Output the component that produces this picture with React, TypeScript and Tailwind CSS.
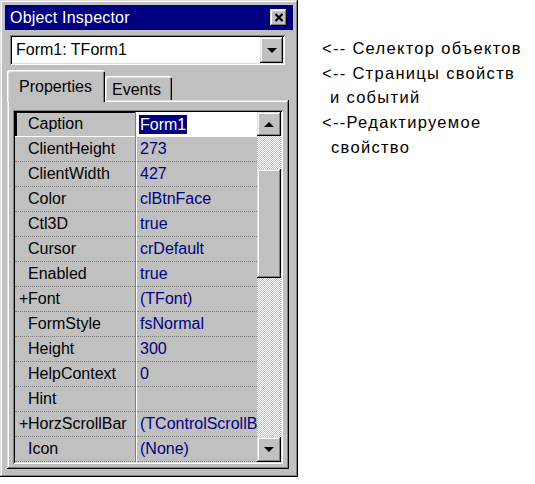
import type { ReactNode } from 'react';

// Win95 bevels
const raised =
  'shadow-[inset_-1px_-1px_0_#000,inset_1px_1px_0_#dfdfdf,inset_-2px_-2px_0_#808080,inset_2px_2px_0_#fff]';
const sunken =
  'shadow-[inset_1px_1px_0_#808080,inset_-1px_-1px_0_#fff,inset_2px_2px_0_#000,inset_-2px_-2px_0_#dfdfdf]';

const rows: { name: string; value: string; plus?: boolean }[] = [
  { name: 'ClientHeight', value: '273' },
  { name: 'ClientWidth', value: '427' },
  { name: 'Color', value: 'clBtnFace' },
  { name: 'Ctl3D', value: 'true' },
  { name: 'Cursor', value: 'crDefault' },
  { name: 'Enabled', value: 'true' },
  { name: 'Font', value: '(TFont)', plus: true },
  { name: 'FormStyle', value: 'fsNormal' },
  { name: 'Height', value: '300' },
  { name: 'HelpContext', value: '0' },
  { name: 'Hint', value: '' },
  { name: 'HorzScrollBar', value: '(TControlScrollB', plus: true },
  { name: 'Icon', value: '(None)' },
];

function Arrow({ up }: { up?: boolean }) {
  return (
    <svg width={10} height={5} viewBox="0 0 10 5">
      <polygon points={up ? '5,0 10,5 0,5' : '0,0 10,0 5,5'} fill="#000" />
    </svg>
  );
}

function Btn({ className, children }: { className: string; children: ReactNode }) {
  return (
    <div className={`flex shrink-0 items-center justify-center bg-[#c0c0c0] ${raised} ${className}`}>
      {children}
    </div>
  );
}

function Divider() {
  return (
    <>
      <div className="w-px shrink-0 bg-[#808080]" />
      <div className="w-px shrink-0 bg-white" />
    </>
  );
}

function Grid() {
  return (
    <div className={`flex h-[354px] w-[270px] bg-[#c0c0c0] p-[2px] ${sunken}`}>
      <div className="flex w-[242px] flex-col">
        {/* selected row */}
        <div className="flex h-[25px]">
          <div className="flex w-[120px] items-center border-b border-white pl-[13px] shadow-[inset_2px_1px_0_#000]">
            Caption
          </div>
          <Divider />
          <div className="flex flex-1 items-center bg-white pl-[2px]">
            <span className="bg-[#000080] px-[1px] leading-[19px] text-white">Form1</span>
          </div>
        </div>
        {rows.map((r) => (
          <div key={r.name} className="flex h-[25px]">
            <div className="flex w-[120px] items-center whitespace-nowrap border-b border-dotted border-[#808080] pl-[4px]">
              <span className="w-[9px]">{r.plus ? '+' : ''}</span>
              {r.name}
            </div>
            <Divider />
            <div className="flex flex-1 items-center overflow-hidden whitespace-nowrap border-b border-dotted border-[#808080] pl-[3px] text-[#000080]">
              {r.value}
            </div>
          </div>
        ))}
      </div>
      <div className="flex w-[24px] flex-col bg-[image:repeating-conic-gradient(#fff_0%_25%,#c0c0c0_0%_50%)] bg-[length:2px_2px]">
        <Btn className="h-[24px]">
          <Arrow up />
        </Btn>
        <div className="h-[33px]" />
        <div className={`h-[109px] bg-[#c0c0c0] ${raised}`} />
        <div className="flex-1" />
        <Btn className="h-[25px]">
          <Arrow />
        </Btn>
      </div>
    </div>
  );
}

function Inspector() {
  return (
    <div className={`flex h-[477px] w-[298px] shrink-0 flex-col bg-[#c0c0c0] p-[5px] ${raised}`}>
      <div className="flex h-[25px] items-center justify-between bg-[#000080] pl-[5px] pr-[6px] text-white">
        <span className="tracking-[0.2px]">Object Inspector</span>
        <Btn className="h-[17px] w-[17px]">
          <svg width={10} height={9} viewBox="0 0 10 9">
            <path d="M1.5 1l7 7M8.5 1l-7 7" stroke="#000" strokeWidth={2.2} />
          </svg>
        </Btn>
      </div>

      <div className={`ml-[5px] mt-[5px] flex h-[30px] w-[275px] bg-white p-[2px] ${sunken}`}>
        <div className="flex flex-1 items-center pl-[4px]">Form1: TForm1</div>
        <Btn className="h-full w-[23px]">
          <Arrow />
        </Btn>
      </div>

      <div className="mt-[5px] flex h-[30px] items-end pl-[2px]">
        <div className="relative z-10 -mb-[2px] h-[32px] w-[98px] rounded-t-[3px] bg-[#c0c0c0] pl-[12px] pt-[8px] leading-[18px] shadow-[inset_1px_1px_0_#fff,inset_2px_2px_0_#dfdfdf,inset_-1px_0_0_#000,inset_-2px_0_0_#808080]">
          Properties
        </div>
        <div className="h-[24px] w-[67px] rounded-t-[3px] bg-[#c0c0c0] pl-[7px] pt-[5px] leading-[18px] shadow-[inset_1px_1px_0_#fff,inset_2px_2px_0_#dfdfdf,inset_-1px_0_0_#000,inset_-2px_0_0_#808080]">
          Events
        </div>
      </div>

      <div className={`ml-[2px] mr-[4px] mb-[3px] flex-1 px-[6px] pb-[5px] pt-[10px] ${raised}`}>
        <Grid />
      </div>
    </div>
  );
}

export default function App() {
  return (
    <div className="flex min-h-screen items-start bg-white font-['Liberation_Sans',Arial,sans-serif] text-[16px] text-black">
      <Inspector />
      <div className="ml-[24px] pt-[36px] text-[16.5px] leading-[24.7px] tracking-[1.3px]">
        <div>&lt;-- Селектор объектов</div>
        <div>&lt;-- Страницы свойств</div>
        <div className="pl-[8px]">и событий</div>
        <div>&lt;--Редактируемое</div>
        <div className="pl-[9px]">свойство</div>
      </div>
    </div>
  );
}
